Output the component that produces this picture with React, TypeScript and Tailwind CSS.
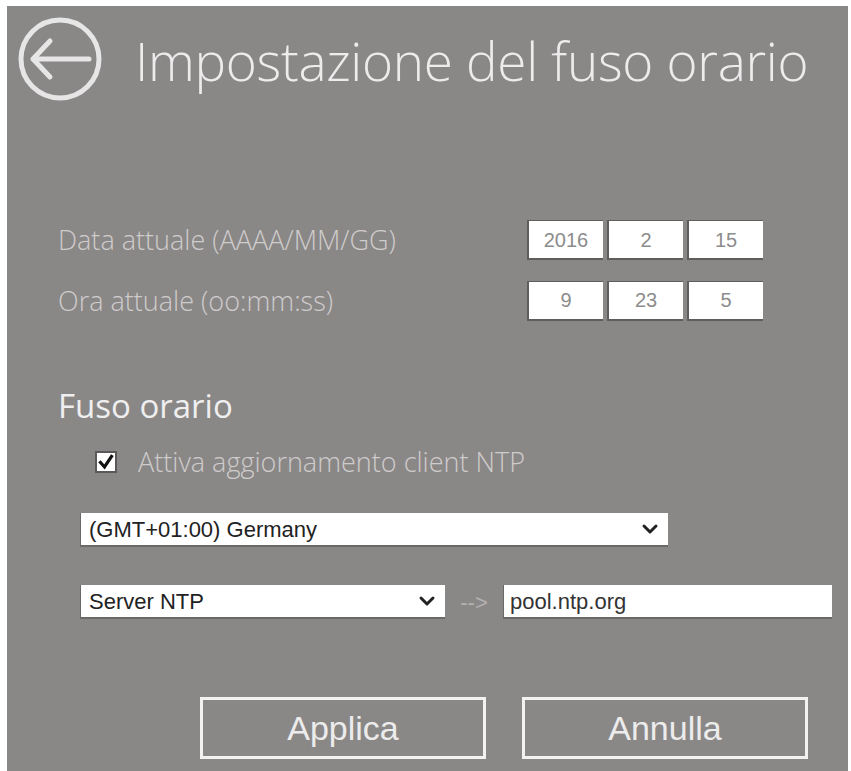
import { ChevronDown } from "lucide-react";

const fieldFont = "font-['Liberation_Sans',Arial,sans-serif]";
const uiFont = "font-['Open_Sans','Noto_Sans',sans-serif]";

function NumberBox({ value }: { value: string }) {
  return (
    <div className={`w-[76px] h-[40px] bg-white border-l-2 border-t border-b-2 border-[#5f5d5d] flex items-center justify-center text-[20px] text-[#8c8c8c] ${fieldFont}`}>
      {value}
    </div>
  );
}

function Select({ label, className }: { label: string; className: string }) {
  return (
    <div className={`h-[34px] bg-white border-b-2 border-l border-[#6a6868] flex items-center justify-between pl-[8px] pr-[6px] text-[22px] text-[#222] ${fieldFont} ${className}`}>
      <span>{label}</span>
      <ChevronDown size={24} strokeWidth={3} className="text-[#222]" />
    </div>
  );
}

export default function App() {
  return (
    <div className="min-h-screen bg-white pt-[6px] pl-[7px]">
      <div className={`w-[841px] h-[765px] bg-[#8a8787] flex flex-col ${uiFont}`}>
        {/* header */}
        <div className="flex items-center pl-[10px] pt-[10px] gap-[32px]">
          <svg width="86" height="86" viewBox="0 0 86 86" fill="none" stroke="#e6e6e6" strokeWidth="5" strokeLinecap="round" strokeLinejoin="round">
            <circle cx="43" cy="43" r="39" />
            <path d="M72 43H16M33 25L16 43L33 61" />
          </svg>
          <h1 className="text-[53px] font-light text-[#ececec] tracking-[-0.3px] leading-none pt-[2px]">Impostazione del fuso orario</h1>
        </div>

        {/* current date and time */}
        <div className="flex flex-col gap-[20px] mt-[118px] pl-[51px] pr-[85px]">
          <div className="flex items-center justify-between">
            <span className="text-[27px] font-light text-[#cfcccc]">Data attuale (AAAA/MM/GG)</span>
            <div className="flex gap-[4px]">
              <NumberBox value="2016" />
              <NumberBox value="2" />
              <NumberBox value="15" />
            </div>
          </div>
          <div className="flex items-center justify-between">
            <span className="text-[27px] font-light text-[#cfcccc]">Ora attuale (oo:mm:ss)</span>
            <div className="flex gap-[4px]">
              <NumberBox value="9" />
              <NumberBox value="23" />
              <NumberBox value="5" />
            </div>
          </div>
        </div>

        {/* time zone */}
        <div className="mt-[68px] pl-[51px]">
          <h2 className="text-[33px] text-[#efefef] leading-none">Fuso orario</h2>
          <label className="flex items-center gap-[21px] mt-[26px] ml-[37px]">
            <span className="w-[22px] h-[22px] bg-white border-2 border-[#5a5858] flex items-center justify-center">
              <svg width="16" height="16" viewBox="0 0 16 16" fill="none" stroke="#111" strokeWidth="3.2" strokeLinecap="square">
                <path d="M2.5 8.5L6.5 13L13.5 2.5" />
              </svg>
            </span>
            <span className="text-[27px] font-light text-[#cfcccc] leading-none">Attiva aggiornamento client NTP</span>
          </label>
        </div>

        <div className="pl-[73px] mt-[38px]">
          <Select label="(GMT+01:00) Germany" className="w-[588px]" />
          <div className="flex items-center mt-[38px]">
            <Select label="Server NTP" className="w-[365px]" />
            <span className={`w-[58px] text-center text-[22px] text-[#b4b1b1] ${fieldFont}`}>--&gt;</span>
            <div className={`w-[329px] h-[34px] bg-white border-b-2 border-l border-[#6a6868] flex items-center pl-[6px] text-[22px] text-[#333] ${fieldFont}`}>
              pool.ntp.org
            </div>
          </div>
        </div>

        {/* actions */}
        <div className="flex gap-[36px] pl-[193px] mt-[78px]">
          <button className={`w-[286px] h-[62px] border-[3px] border-[#f2f2f2] text-[34px] text-[#ececec] ${fieldFont}`}>Applica</button>
          <button className={`w-[286px] h-[62px] border-[3px] border-[#f2f2f2] text-[34px] text-[#ececec] ${fieldFont}`}>Annulla</button>
        </div>
      </div>
    </div>
  );
}
